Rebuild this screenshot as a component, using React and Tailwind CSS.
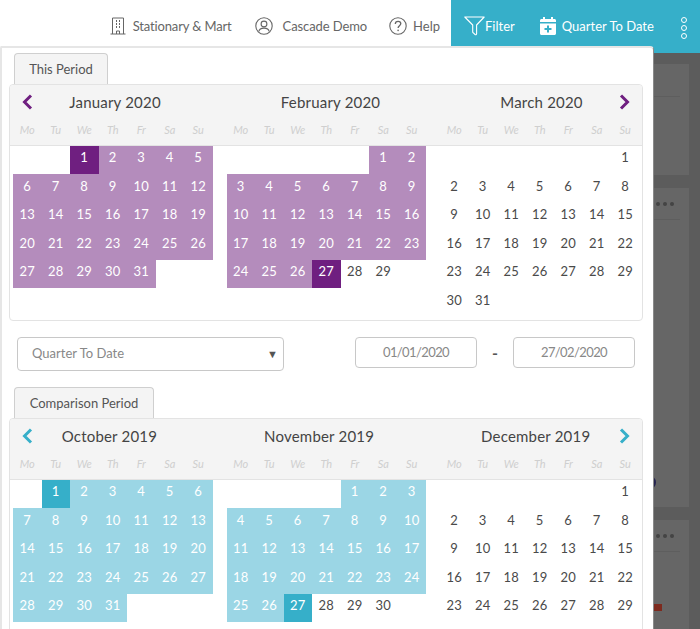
const FONT = "font-['Lato','Open_Sans',sans-serif]";
const WEEK = ["Mo", "Tu", "We", "Th", "Fr", "Sa", "Su"];

function Month({ offset, count, rangeEnd, strong, rangeClass, strongClass }) {
  const cells = [];
  for (let i = 0; i < offset; i++) cells.push(<div key={"e" + i} className="h-[28.43px]" />);
  for (let d = 1; d <= count; d++) {
    let cls = "text-[#4a4a4a]";
    if (d === strong) cls = strongClass + " text-white";
    else if (d <= rangeEnd) cls = rangeClass + " text-white";
    cells.push(
      <div key={d} className={"h-[28.43px] pb-[4px] flex items-center justify-center text-[13px] tracking-[0.3px] " + cls}>{d}</div>
    );
  }
  return <div className="grid grid-cols-7 w-[199.5px] content-start">{cells}</div>;
}

function WeekHead() {
  return (
    <div className="grid grid-cols-7 w-[199.5px]">
      {WEEK.map((w) => (
        <div key={w} className="text-center italic text-[11px] leading-[14px] text-[#cfcfcf]">{w}</div>
      ))}
    </div>
  );
}

function Chevron({ dir, color }) {
  return (
    <svg width="11" height="16" viewBox="0 0 11 16" fill="none" className={color}>
      <path d={dir === "left" ? "M9 1.5 L2.5 8 L9 14.5" : "M2 1.5 L8.5 8 L2 14.5"} stroke="currentColor" strokeWidth="3" />
    </svg>
  );
}

function Calendar({ titles, gapClass, arrowColor, months, rangeClass, strongClass }) {
  return (
    <div className="w-[634px] border border-[#e3e3e3] rounded-[4px] bg-white relative">
      <div className="bg-[#f4f4f4] border-b border-[#e3e3e3] h-[61px] rounded-t-[4px] pt-[9px]">
        <div className="flex items-center justify-between h-[16px] pl-[12px] pr-[12px]">
          <Chevron dir="left" color={arrowColor} />
          <div className={"flex items-center text-[15px] text-[#444] tracking-[0.2px] " + gapClass}>
            {titles.map((t) => <span key={t} className="whitespace-nowrap">{t}</span>)}
          </div>
          <Chevron dir="right" color={arrowColor} />
        </div>
        <div className="flex gap-[14px] pl-[3px] mt-[13px]">
          <WeekHead />
          <WeekHead />
          <WeekHead />
        </div>
      </div>
      <div className="flex gap-[14px] pl-[3px] h-[174px]">
        {months.map((m, i) => (
          <Month key={i} {...m} rangeClass={rangeClass} strongClass={strongClass} />
        ))}
      </div>
    </div>
  );
}

function Tab({ children, widthClass }) {
  return (
    <div className={"ml-[5px] h-[32px] -mb-px relative border border-b-0 border-[#cfcfcf] rounded-t-[4px] bg-[#f4f4f4] flex items-center justify-center text-[13px] text-[#555] " + widthClass}>
      {children}
    </div>
  );
}

function Building() {
  return (
    <svg width="16" height="18" viewBox="0 0 16 18" fill="none" stroke="#666" strokeWidth="1">
      <path d="M2.500 17V1h11v16M0.500 17h15M6.500 17v-3h3v3" />
      <path d="M6 4h1M9 4h1M6 7h1M9 7h1M6 10h1M9 10h1" strokeWidth="2" />
    </svg>
  );
}
function UserIcon() {
  return (
    <svg width="18" height="18" viewBox="0 0 18 18" fill="none" stroke="#666" strokeWidth="1.1">
      <circle cx="9" cy="9" r="8.2" />
      <circle cx="9" cy="7" r="2.9" />
      <path d="M3.800 14.500c.4-2.400 2.400-3.400 5.200-3.400s4.800 1 5.200 3.400" />
    </svg>
  );
}
function HelpIcon() {
  return (
    <svg width="18" height="18" viewBox="0 0 18 18" fill="none" stroke="#666" strokeWidth="1.1">
      <circle cx="9" cy="9" r="8.2" />
      <path d="M6.300 7c0-1.700 1.200-2.700 2.800-2.700 1.600 0 2.700 1 2.700 2.300 0 2-2.700 2.100-2.700 4.300" strokeWidth="1.3" />
      <circle cx="9.100" cy="13.400" r=".8" fill="#666" stroke="none" />
    </svg>
  );
}
function FunnelIcon() {
  return (
    <svg width="21" height="20" viewBox="0 0 21 20" fill="none" stroke="#fff" strokeWidth="1.1" strokeLinejoin="round">
      <path d="M.8 1h19.400l-7.600 8v8.800c0 .8-.9 1.200-1.500.7l-2-1.800c-.3-.2-.4-.5-.4-.8V9z" />
    </svg>
  );
}
function CalPlus() {
  return (
    <svg width="16" height="18" viewBox="0 0 16 18">
      <path fill="#fff" d="M3 0h2v2h6V0h2v2h1.500C15.300 2 16 2.700 16 3.500V5H0V3.500C0 2.700.7 2 1.500 2H3zM0 6.500h16v10c0 .8-.7 1.500-1.500 1.500h-13C.7 18 0 17.300 0 16.500z" />
      <path fill="#36afc9" d="M7 8.500h2v2.500h2.500v2H9v2.500H7V13H4.500v-2H7z" />
    </svg>
  );
}
function Dots() {
  return (
    <div className="flex flex-col gap-[2px]">
      <span className="w-[6px] h-[6px] rounded-full border border-white" />
      <span className="w-[6px] h-[6px] rounded-full border border-white" />
      <span className="w-[6px] h-[6px] rounded-full border border-white" />
    </div>
  );
}

function CardDots() {
  return (
    <div className="flex justify-end gap-[3px] pr-[6px] pt-[14px] h-[32px] border-b border-[#5e5e5e] mr-[9px]">
      <span className="w-[4px] h-[4px] rounded-full bg-[#444]" />
      <span className="w-[4px] h-[4px] rounded-full bg-[#444]" />
      <span className="w-[4px] h-[4px] rounded-full bg-[#444]" />
    </div>
  );
}

export default function App() {
  return (
    <div className={"relative w-[700px] h-[629px] overflow-hidden bg-white flex flex-col " + FONT}>
      <header className="h-[53px] flex justify-end shrink-0 text-[13px]">
        <div className="flex items-start pt-[17px] text-[#666]">
          <div className="flex items-center gap-[7px] mr-[23px] h-[18px]">
            <Building />
            <span className="pt-[2px] tracking-[-0.15px]">Stationary &amp; Mart</span>
          </div>
          <div className="flex items-center gap-[10px] mr-[22px] h-[18px]">
            <UserIcon />
            <span className="pt-[2px] tracking-[-0.1px]">Cascade Demo</span>
          </div>
          <div className="flex items-center gap-[6px] mr-[11px] h-[18px]">
            <HelpIcon />
            <span className="pt-[2px]">Help</span>
          </div>
        </div>
        <div className="w-[249px] bg-[#36afc9] text-white flex items-start pt-[17px] pl-[13px]">
          <div className="flex items-center mr-[25px] h-[18px]">
            <FunnelIcon />
            <span className="pt-[2px]">Filter</span>
          </div>
          <div className="flex items-center gap-[6px] mr-[27px] h-[18px]">
            <CalPlus />
            <span className="pt-[2px]">Quarter To Date</span>
          </div>
          <Dots />
        </div>
      </header>

      <main className="flex-1 bg-[#5c5c5c] flex flex-col gap-[13px] pt-[11px] pr-[11px] pl-[12px] overflow-hidden">
        <div className="h-[111px] shrink-0 bg-[#666]">
          <div className="h-[33px] border-b border-[#5e5e5e] mr-[9px]" />
        </div>
        <div className="h-[319px] shrink-0 bg-[#666] flex flex-col">
          <CardDots />
          <div className="self-end mr-[33px] mt-[255px] w-[15px] h-[15px] rounded-full border-2 border-[#25244f]" />
        </div>
        <div className="flex-1 bg-[#666] flex flex-col">
          <CardDots />
          <div className="self-end mr-[27px] mt-[52px] w-[20px] h-[7px] bg-[#7d2a1e]" />
        </div>
      </main>

      <div className="absolute left-0 top-[46px] w-[654px] h-[600px] bg-white border-t-2 border-l-2 border-r border-[#e6e6e6] border-r-[#8a8a8a] rounded-tr-[4px] rounded-tl-[2px] pl-[7px] pt-[5px]">
        <Tab widthClass="w-[94px]">This Period</Tab>
        <Calendar
          titles={["January 2020", "February 2020", "March 2020"]}
          gapClass="gap-[120px]"
          arrowColor="text-[#6f1f80]"
          rangeClass="bg-[#b48cbc]"
          strongClass="bg-[#6f1f80]"
          months={[
            { offset: 2, count: 31, rangeEnd: 31, strong: 1 },
            { offset: 5, count: 29, rangeEnd: 26, strong: 27 },
            { offset: 6, count: 31, rangeEnd: 0, strong: 0 },
          ]}
        />
        <div className="flex items-start mt-[16px] pl-[8px] text-[13px] text-[#888]">
          <div className="w-[267px] h-[34px] border border-[#c8c8c8] rounded-[4px] flex items-center justify-between pl-[14px] pr-[5px]">
            <span>Quarter To Date</span>
            <span className="text-[11px] text-[#555]">▼</span>
          </div>
          <div className="ml-[71px] w-[122px] h-[31px] border border-[#c8c8c8] rounded-[4px] flex items-center justify-center tracking-[-0.6px]">01/01/2020</div>
          <div className="w-[36px] h-[31px] flex items-center justify-center text-[#555] text-[16px] font-bold">-</div>
          <div className="w-[122px] h-[31px] border border-[#c8c8c8] rounded-[4px] flex items-center justify-center tracking-[-0.6px]">27/02/2020</div>
        </div>
        <div className="mt-[16px]">
          <Tab widthClass="w-[140px]">Comparison Period</Tab>
        </div>
        <Calendar
          titles={["October 2019", "November 2019", "December 2019"]}
          gapClass="gap-[107px]"
          arrowColor="text-[#36afc9]"
          rangeClass="bg-[#9bd6e5]"
          strongClass="bg-[#36afc9]"
          months={[
            { offset: 1, count: 31, rangeEnd: 31, strong: 1 },
            { offset: 4, count: 30, rangeEnd: 26, strong: 27 },
            { offset: 6, count: 29, rangeEnd: 0, strong: 0 },
          ]}
        />
      </div>
    </div>
  );
}
